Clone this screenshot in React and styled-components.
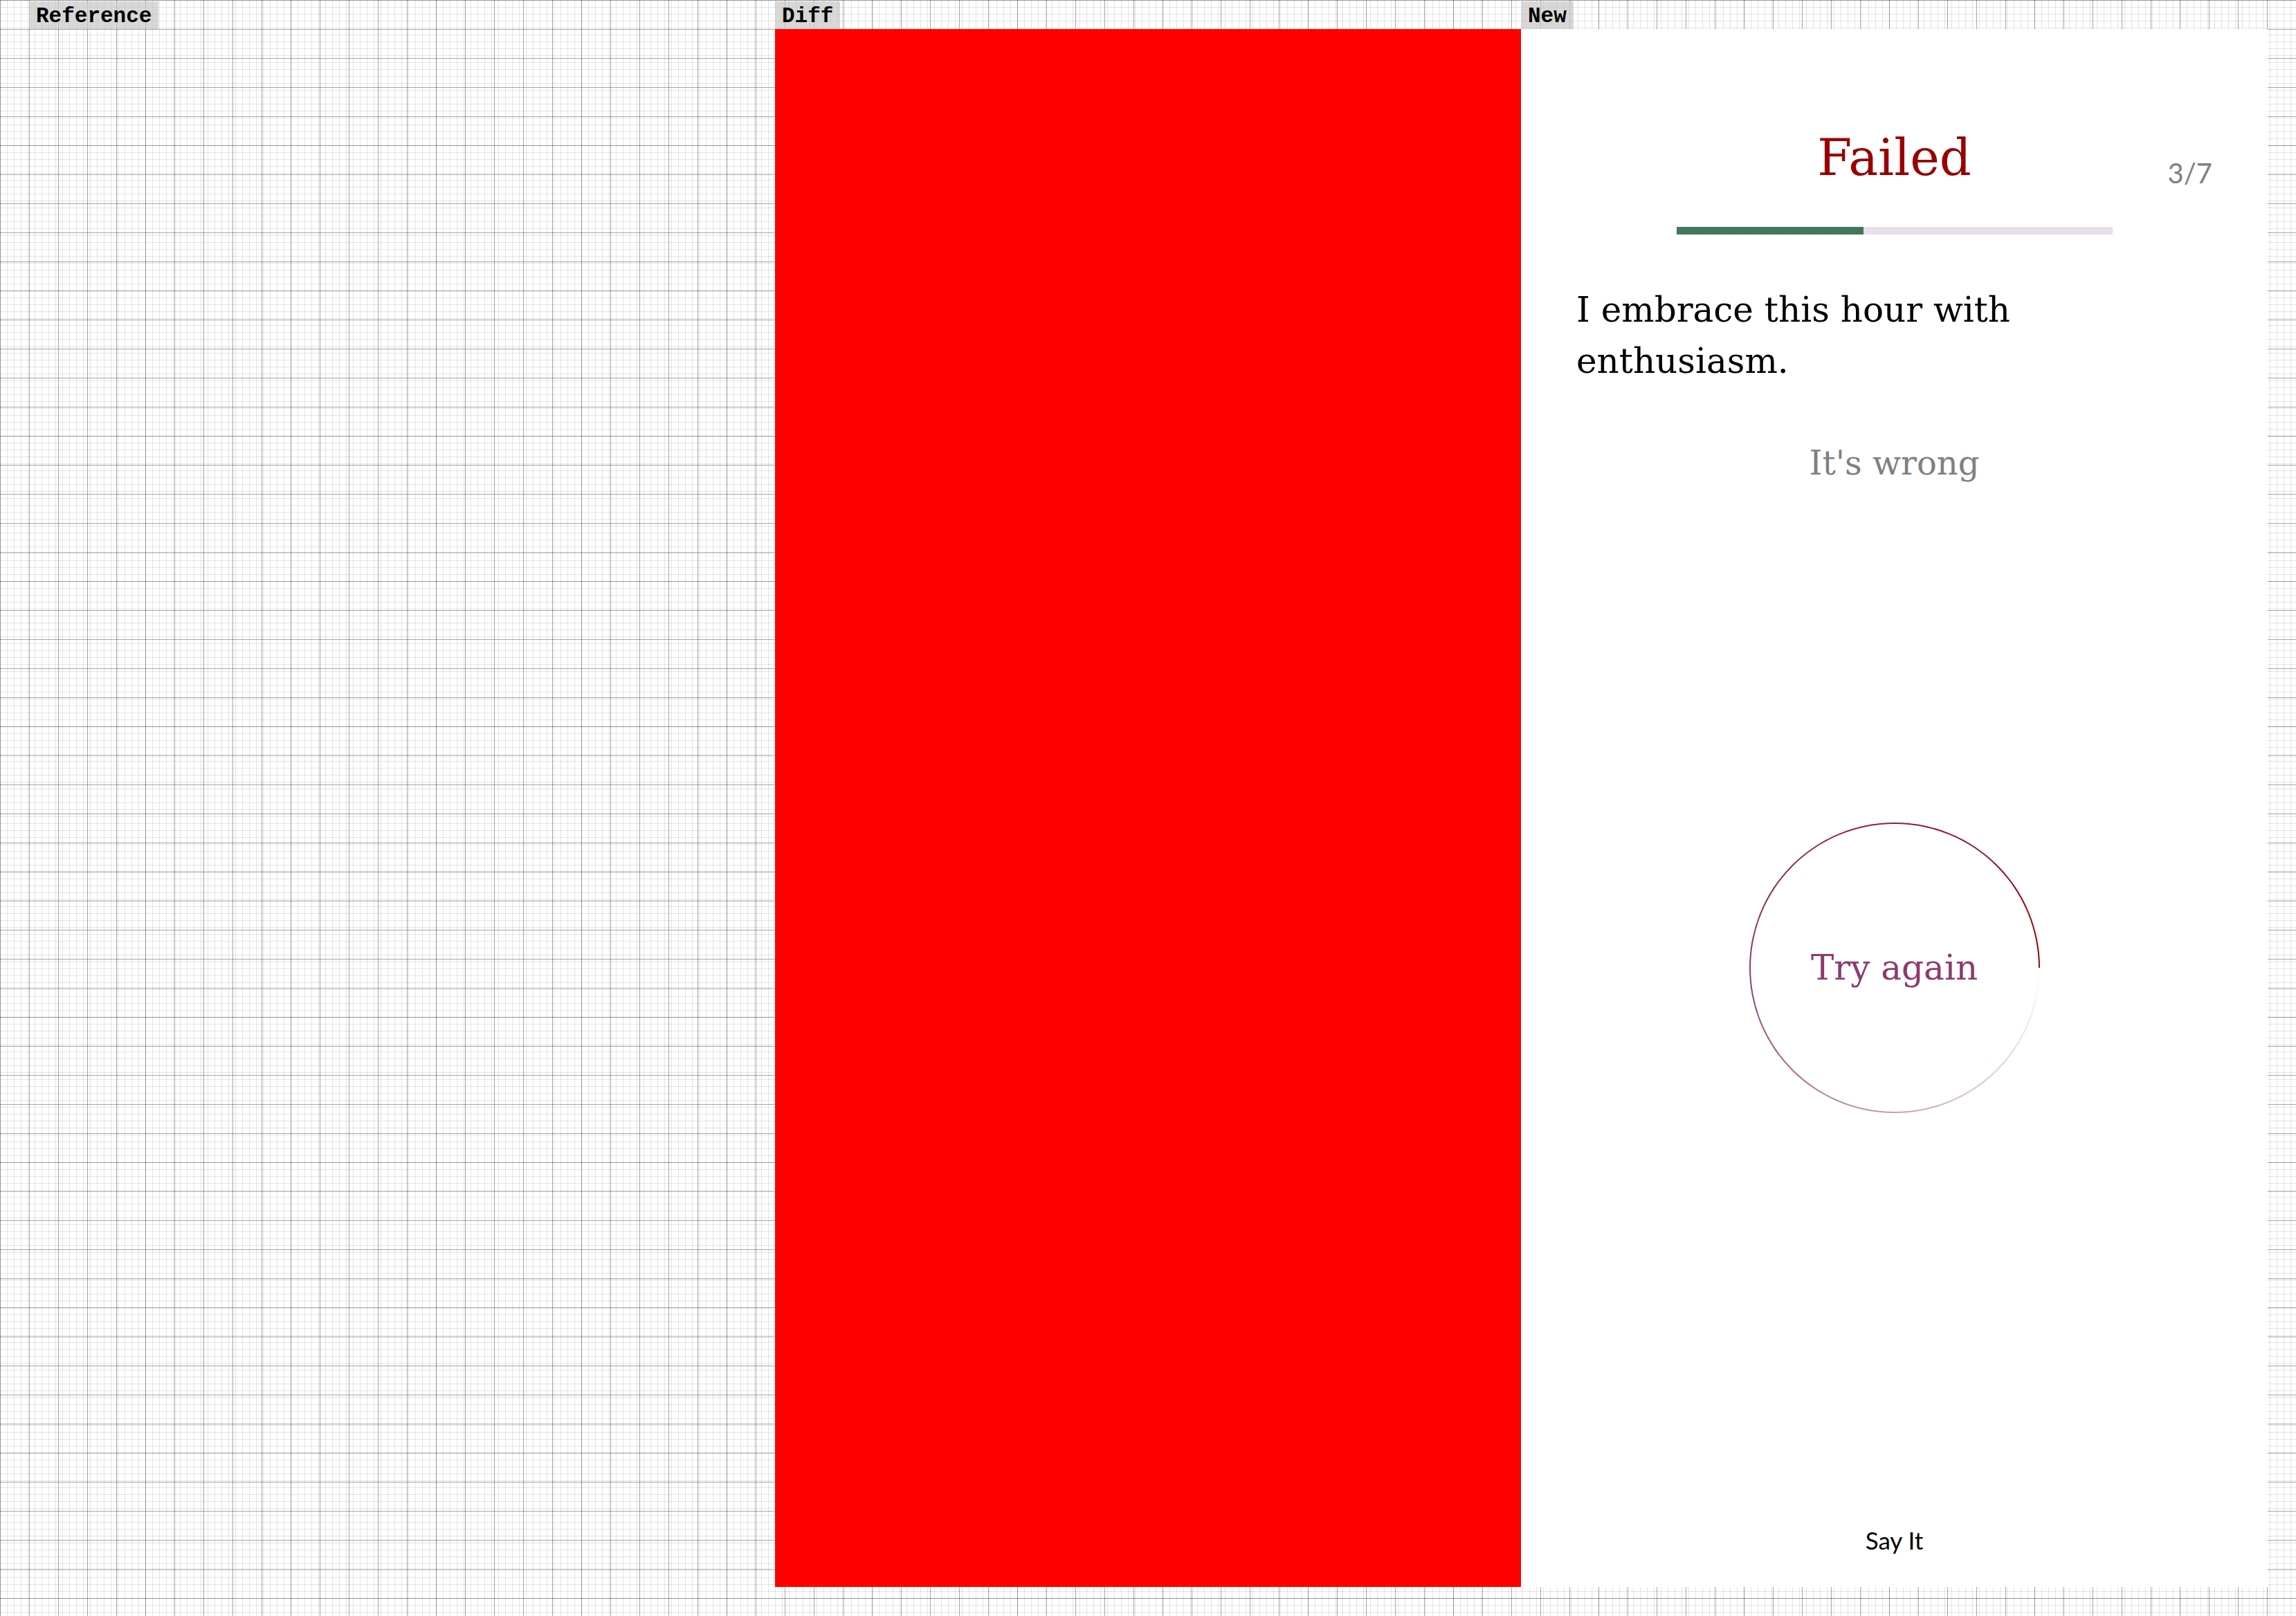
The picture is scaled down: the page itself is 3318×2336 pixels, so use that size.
import React from 'react'
import styled, { createGlobalStyle } from 'styled-components'

const GlobalStyle = createGlobalStyle`
  html, body {
    margin: 0;
    padding: 0;
  }
  body {
    min-height: 100vh;
    background-color: #fff;
    background-image:
      linear-gradient(to right, rgba(0, 0, 0, 0.34) 1px, transparent 1px),
      linear-gradient(to bottom, rgba(0, 0, 0, 0.34) 1px, transparent 1px),
      linear-gradient(to right, rgba(0, 0, 0, 0.1) 1px, transparent 1px),
      linear-gradient(to bottom, rgba(0, 0, 0, 0.1) 1px, transparent 1px);
    background-size: 42px 42px, 42px 42px, 10px 10px, 10px 10px;
  }
`;

const Page = styled.main`
  display: flex;
  padding: 2px 0 0 42px;
`;

const Column = styled.section`
  width: ${(p) => p.$w}px;
  display: flex;
  flex-direction: column;
  align-items: flex-start;
`;

const Tag = styled.div`
  box-sizing: border-box;
  height: 40px;
  padding: 3px 10px 0;
  background: rgba(200, 200, 200, 0.7);
  color: #000;
  font: 700 31px/37px "Liberation Mono", monospace;
  white-space: nowrap;
`;

const Frame = styled.div`
  box-sizing: border-box;
  width: 100%;
  height: 2252px;
  background: ${(p) => p.$bg || 'transparent'};
`;

const Screen = styled(Frame)`
  display: flex;
  flex-direction: column;
  padding: 150px 80px 52px;
  background: #fff;
`;

const Header = styled.header`
  display: grid;
  grid-template-columns: 1fr auto 1fr;
  align-items: start;
`;

const Title = styled.h1`
  grid-column: 2;
  margin: 0;
  font: 400 72px/72px "DejaVu Serif", serif;
  color: #990000;
`;

const Counter = styled.span`
  grid-column: 3;
  justify-self: end;
  margin-top: 38px;
  font: 400 40px/40px "Lato", sans-serif;
  color: #808080;
`;

const Progress = styled.div`
  width: 630px;
  height: 11px;
  margin: 58px auto 0;
  background: #e6dfec;
`;

const ProgressFill = styled.div`
  height: 100%;
  background: #44775a;
`;

const Statement = styled.p`
  margin: 72px 0 0;
  font: 400 50px/74px "DejaVu Serif", serif;
  color: #000;
`;

const Feedback = styled.p`
  margin: 80px 0 0;
  text-align: center;
  font: 400 48px/60px "DejaVu Serif", serif;
  color: #808080;
`;

const Ring = styled.div`
  box-sizing: border-box;
  width: 420px;
  height: 420px;
  margin: 490px auto 0;
  padding: 2px;
  border-radius: 50%;
  background: conic-gradient(
    from 90deg,
    rgba(140, 58, 108, 0) 0deg,
    rgba(140, 58, 108, 0.5) 90deg,
    #8c3a6c 180deg,
    #8e1d45 270deg,
    #a00000 360deg
  );
`;

const RingButton = styled.button`
  width: 100%;
  height: 100%;
  border: none;
  border-radius: 50%;
  background: #fff;
  display: flex;
  align-items: center;
  justify-content: center;
  cursor: pointer;
  font: 400 50px/50px "DejaVu Serif", serif;
  color: #8c3b6e;
`;

const Footer = styled.div`
  margin-top: auto;
  text-align: center;
  font: 400 35px/32px "Lato", sans-serif;
  color: #000;
`;

const step = 3;
const total = 7;

export default function App() {
  return (
    <>
      <GlobalStyle />
      <Page>
        <Column $w={1078}>
          <Tag>Reference</Tag>
          <Frame />
        </Column>
        <Column $w={1078}>
          <Tag>Diff</Tag>
          <Frame $bg="#ff0000" />
        </Column>
        <Column $w={1079}>
          <Tag>New</Tag>
          <Screen>
            <Header>
              <Title>Failed</Title>
              <Counter>{step}/{total}</Counter>
            </Header>
            <Progress>
              <ProgressFill style={{ width: `${(step / total) * 100}%` }} />
            </Progress>
            <Statement>I embrace this hour with enthusiasm.</Statement>
            <Feedback>It's wrong</Feedback>
            <Ring>
              <RingButton>Try again</RingButton>
            </Ring>
            <Footer>Say It</Footer>
          </Screen>
        </Column>
      </Page>
    </>
  )
}
